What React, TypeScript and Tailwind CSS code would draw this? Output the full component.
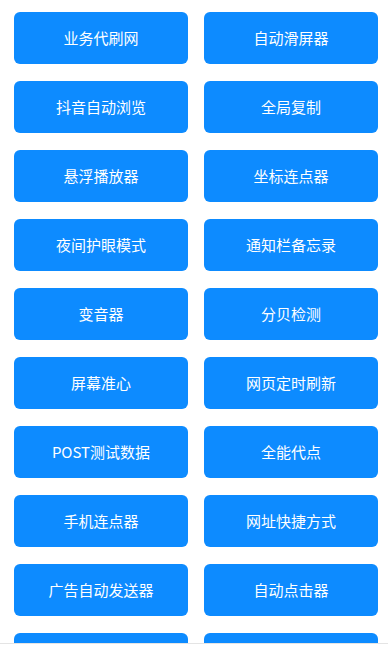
export default function App() {
  const items = [
    "业务代刷网",
    "自动滑屏器",
    "抖音自动浏览",
    "全局复制",
    "悬浮播放器",
    "坐标连点器",
    "夜间护眼模式",
    "通知栏备忘录",
    "变音器",
    "分贝检测",
    "屏幕准心",
    "网页定时刷新",
    "POST测试数据",
    "全能代点",
    "手机连点器",
    "网址快捷方式",
    "广告自动发送器",
    "自动点击器",
    "",
    "",
  ];

  return (
    <div
      className="h-[653px] w-[388px] bg-white flex flex-col overflow-hidden"
      style={{ fontFamily: '"Noto Sans CJK SC", "Noto Sans", sans-serif' }}
    >
      <div className="flex-1 overflow-hidden">
        <div className="grid grid-cols-2 gap-x-4 gap-y-[17px] pl-[14px] pr-[10px] pt-3">
          {items.map((label, i) => (
            <button
              key={i}
              className="h-[52px] rounded-[6px] bg-[#0d8bff] text-white text-[15px] font-normal flex items-center justify-center"
            >
              {label}
            </button>
          ))}
        </div>
      </div>
      <div className="h-[10px] shrink-0 border-t border-[#e4e4e4] bg-white"></div>
    </div>
  );
}
